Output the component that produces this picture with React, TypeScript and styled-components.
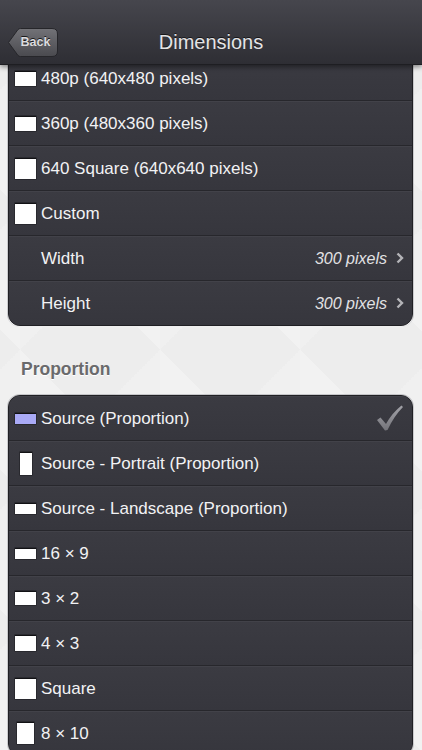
import React from 'react';
import styled, { createGlobalStyle } from 'styled-components';

const GlobalStyle = createGlobalStyle`
    html, body {
        margin: 0;
        padding: 0;
        font-family: 'Liberation Sans', Arial, Helvetica, sans-serif;
    }
`;

const Screen = styled.div`
    position: relative;
    width: 422px;
    height: 750px;
    overflow: hidden;
    background-color: #ededed;
    background-image:
        linear-gradient(45deg, rgba(255, 255, 255, 0.3) 25%, transparent 25%, transparent 75%, rgba(255, 255, 255, 0.3) 75%),
        linear-gradient(-45deg, rgba(255, 255, 255, 0.18) 25%, transparent 25%, transparent 75%, rgba(255, 255, 255, 0.18) 75%);
    background-size: 140px 140px;
    background-position: 20px 0, 20px 0;
`;

const NavBar = styled.header`
    position: absolute;
    top: 0;
    left: 0;
    right: 0;
    height: 65px;
    z-index: 2;
    box-sizing: border-box;
    padding-top: 20px;
    display: grid;
    grid-template-columns: 1fr auto 1fr;
    align-items: center;
    background: linear-gradient(#46464d, #2e2e34);
    border-bottom: 1px solid #1e1e22;
    box-shadow: 0 2px 5px rgba(0, 0, 0, 0.45);
`;

const Title = styled.h1`
    margin: 0;
    font-size: 20px;
    font-weight: normal;
    color: #e4e4e6;
    text-shadow: 0 -1px 0 rgba(0, 0, 0, 0.6);
`;

const BackButton = styled.button`
    position: relative;
    justify-self: start;
    margin-left: 8px;
    width: 50px;
    height: 29px;
    padding: 0 0 0 5px;
    border: none;
    background: none;
    display: flex;
    align-items: center;
    justify-content: center;
    font-family: inherit;
    font-size: 12.5px;
    font-weight: bold;
    color: #dcdcde;
    text-shadow: 0 -1px 0 rgba(0, 0, 0, 0.75);

    svg {
        position: absolute;
        top: 0;
        left: 0;
    }

    span {
        position: relative;
    }
`;

const Content = styled.main`
    display: flex;
    flex-direction: column;
    padding: 10px 9px 0 8px;
`;

const Card = styled.section`
    border: 1px solid #202024;
    border-radius: 12px;
    overflow: hidden;
    background: #38383f;
    box-shadow: 0 1px 1px rgba(255, 255, 255, 0.8), 0 0 0 1px rgba(120, 120, 128, 0.35);
`;

const Row = styled.div`
    display: flex;
    align-items: center;
    height: 44px;
    padding: 0 8px 0 4px;
    background: linear-gradient(#3b3b42, #36363d);
    box-shadow: inset 0 1px 0 rgba(255, 255, 255, 0.04);

    & + & {
        border-top: 1px solid #27272c;
    }
`;

const IconSlot = styled.div`
    width: 25px;
    margin-right: 3px;
    display: flex;
    justify-content: center;
    align-items: center;
`;

const Swatch = styled.div<{ w: number; h: number; fill?: string }>`
    width: ${({ w }) => w}px;
    height: ${({ h }) => h}px;
    background: ${({ fill }) => fill || '#ffffff'};
    box-shadow: inset 0 1px 0 #111114, 0 0 0 0.5px #1a1a1e;
`;

const Label = styled.span`
    flex: 1;
    padding-top: 2px;
    font-size: 17px;
    color: #f2f2f4;
    white-space: nowrap;
`;

const Value = styled.span`
    padding-top: 2px;
    font-size: 16px;
    font-style: italic;
    color: #e2e2e4;
    margin-right: 9px;
`;

const SectionLabel = styled.h2`
    margin: 30px 0 15px 13px;
    height: 24px;
    line-height: 26px;
    font-size: 17.5px;
    font-weight: bold;
    color: #6a6a6c;
    text-shadow: 0 1px 0 #ffffff;
`;

type Option = {
    label: string;
    w: number;
    h: number;
    fill?: string;
    checked?: boolean;
};

const dimensions: Option[] = [
    { label: '480p (640x480 pixels)', w: 21, h: 15 },
    { label: '360p (480x360 pixels)', w: 21, h: 15 },
    { label: '640 Square (640x640 pixels)', w: 21, h: 21 },
    { label: 'Custom', w: 21, h: 21 },
];

const proportions: Option[] = [
    { label: 'Source (Proportion)', w: 21, h: 11, fill: '#a9aaf6', checked: true },
    { label: 'Source - Portrait (Proportion)', w: 12, h: 23 },
    { label: 'Source - Landscape (Proportion)', w: 21, h: 11 },
    { label: '16 × 9', w: 21, h: 11 },
    { label: '3 × 2', w: 21, h: 14 },
    { label: '4 × 3', w: 21, h: 16 },
    { label: 'Square', w: 21, h: 21 },
    { label: '8 × 10', w: 17, h: 22 },
];

const BackShape = () => (
    <svg width="50" height="29" viewBox="0 0 50 29">
        <defs>
            <linearGradient id="backFill" x1="0" y1="0" x2="0" y2="1">
                <stop offset="0" stopColor="#727277" />
                <stop offset="1" stopColor="#4a4a4f" />
            </linearGradient>
        </defs>
        <path
            d="M0.5 14.5 L10 1.5 Q11 0.5 12.5 0.5 L44 0.5 Q49.5 0.5 49.5 6 L49.5 23 Q49.5 28.5 44 28.5 L12.5 28.5 Q11 28.5 10 27.5 Z"
            fill="url(#backFill)"
            stroke="#26262a"
            strokeWidth="1"
        />
    </svg>
);

const Chevron = () => (
    <svg width="8" height="12" viewBox="0 0 8 12">
        <polyline points="1.5,1.5 6,6 1.5,10.5" fill="none" stroke="#b4b4b8" strokeWidth="2.4" />
    </svg>
);

const Check = () => (
    <svg width="28" height="28" viewBox="0 0 28 28">
        <defs>
            <linearGradient id="checkFill" x1="0" y1="0" x2="0" y2="1">
                <stop offset="0" stopColor="#a2a2a8" />
                <stop offset="1" stopColor="#74747a" />
            </linearGradient>
        </defs>
        <path d="M1 16 L4.5 13.5 L10 20 Q16 9 25.5 1.5 L27 3 Q18 12 11.5 26 L9 26.5 Z" fill="url(#checkFill)" />
    </svg>
);

const OptionRow: React.FC<{ option: Option }> = ({ option }) => (
    <Row>
        <IconSlot>
            <Swatch w={option.w} h={option.h} fill={option.fill} />
        </IconSlot>
        <Label>{option.label}</Label>
        {option.checked && <Check />}
    </Row>
);

const SizeRow: React.FC<{ label: string; value: string }> = ({ label, value }) => (
    <Row>
        <IconSlot />
        <Label>{label}</Label>
        <Value>{value}</Value>
        <Chevron />
    </Row>
);

const App: React.FC = () => {
    return (
        <Screen>
            <GlobalStyle />
            <NavBar>
                <BackButton>
                    <BackShape />
                    <span>Back</span>
                </BackButton>
                <Title>Dimensions</Title>
            </NavBar>
            <Content>
                <Card>
                    {/* row scrolled away under the navigation bar */}
                    <Row />
                    {dimensions.map((option) => (
                        <OptionRow key={option.label} option={option} />
                    ))}
                    <SizeRow label="Width" value="300 pixels" />
                    <SizeRow label="Height" value="300 pixels" />
                </Card>
                <SectionLabel>Proportion</SectionLabel>
                <Card>
                    {proportions.map((option) => (
                        <OptionRow key={option.label} option={option} />
                    ))}
                </Card>
            </Content>
        </Screen>
    );
};

export default App;
